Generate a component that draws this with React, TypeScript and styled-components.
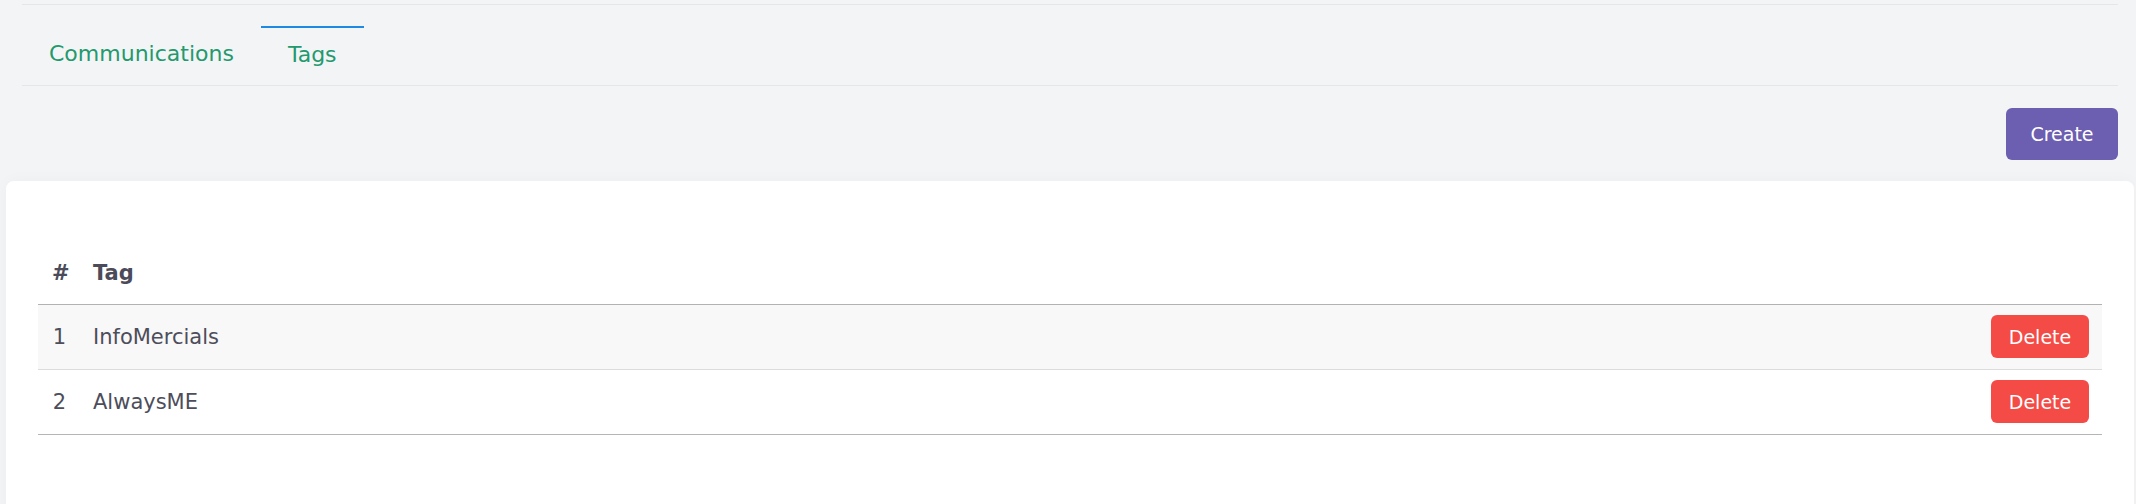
import React from "react";
import styled, { createGlobalStyle } from "styled-components";

const GlobalStyle = createGlobalStyle`
  html, body {
    margin: 0;
    padding: 0;
    background: #f3f4f6;
    font-family: "DejaVu Sans", "Liberation Sans", sans-serif;
  }
  * { box-sizing: border-box; }
`;

const Page = styled.div`
  padding: 4px 2px 0 6px;
  min-height: 504px;
  display: flex;
  flex-direction: column;
`;

const TopSection = styled.div`
  margin: 0 16px;
  border-top: 1px solid #e4e6ea;
`;

const TabBar = styled.div`
  display: flex;
  align-items: center;
  height: 81px;
  padding-top: 21px;
  border-bottom: 1px solid #e4e6ea;
`;

const Tab = styled.div<{ $active?: boolean }>`
  padding: 0 27px 3px;
  line-height: 54px;
  font-size: 22px;
  color: #23996d;
  border-top: ${(p) => (p.$active ? "2px solid #1e88e5" : "none")};
  cursor: pointer;
  white-space: nowrap;
`;

const Toolbar = styled.div`
  display: flex;
  justify-content: flex-end;
  padding: 22px 0 21px;
`;

const Button = styled.button<{ $variant: "primary" | "danger" }>`
  border: none;
  border-radius: 6px;
  color: #ffffff;
  font-family: inherit;
  font-size: 19px;
  cursor: pointer;
  background: ${(p) => (p.$variant === "primary" ? "#6c5eb0" : "#f44b47")};
  width: ${(p) => (p.$variant === "primary" ? "112px" : "98px")};
  height: ${(p) => (p.$variant === "primary" ? "52px" : "43px")};
  padding: 0;
  vertical-align: middle;
`;

const Card = styled.div`
  flex: 1;
  background: #ffffff;
  border-radius: 8px 8px 0 0;
  padding: 61px 32px 80px;
  box-shadow: 0 0 16px rgba(30, 40, 60, 0.03);
`;

const Table = styled.table`
  width: 100%;
  table-layout: fixed;
  border-collapse: collapse;
  font-size: 21px;
  color: #4d4d5b;
`;

const HeadCell = styled.th<{ $align?: "left" | "right"; $width?: string }>`
  height: 62px;
  padding: 0 ${(p) => (p.$align === "right" ? "13px" : "14px")} 0 14px;
  text-align: ${(p) => p.$align ?? "left"};
  width: ${(p) => p.$width ?? "auto"};
  font-weight: 700;
  color: #4b4b5a;
  border-bottom: 1px solid #b2b2b2;
`;

const Row = styled.tr<{ $striped?: boolean }>`
  background: ${(p) => (p.$striped ? "#f8f8f8" : "#ffffff")};
  border-bottom: 1px solid #dcdcdc;
  &:last-child {
    border-bottom: 1px solid #b5b5b5;
  }
`;

const Cell = styled.td<{ $align?: "left" | "right" }>`
  height: 65px;
  padding: 0 ${(p) => (p.$align === "right" ? "13px" : "14px")} 0 14px;
  text-align: ${(p) => p.$align ?? "left"};
  vertical-align: middle;
`;

const tags = [
  { id: 1, name: "InfoMercials" },
  { id: 2, name: "AlwaysME" },
];

export default function App() {
  return (
    <>
      <GlobalStyle />
      <Page>
        <TopSection>
          <TabBar>
            <Tab>Communications</Tab>
            <Tab $active>Tags</Tab>
          </TabBar>
          <Toolbar>
            <Button $variant="primary">Create</Button>
          </Toolbar>
        </TopSection>
        <Card>
          <Table>
            <thead>
              <tr>
                <HeadCell $align="right" $width="41px">#</HeadCell>
                <HeadCell>Tag</HeadCell>
                <HeadCell $align="right" $width="160px"></HeadCell>
              </tr>
            </thead>
            <tbody>
              {tags.map((t, i) => (
                <Row key={t.id} $striped={i % 2 === 0}>
                  <Cell $align="right">{t.id}</Cell>
                  <Cell>{t.name}</Cell>
                  <Cell $align="right">
                    <Button $variant="danger">Delete</Button>
                  </Cell>
                </Row>
              ))}
            </tbody>
          </Table>
        </Card>
      </Page>
    </>
  );
}
